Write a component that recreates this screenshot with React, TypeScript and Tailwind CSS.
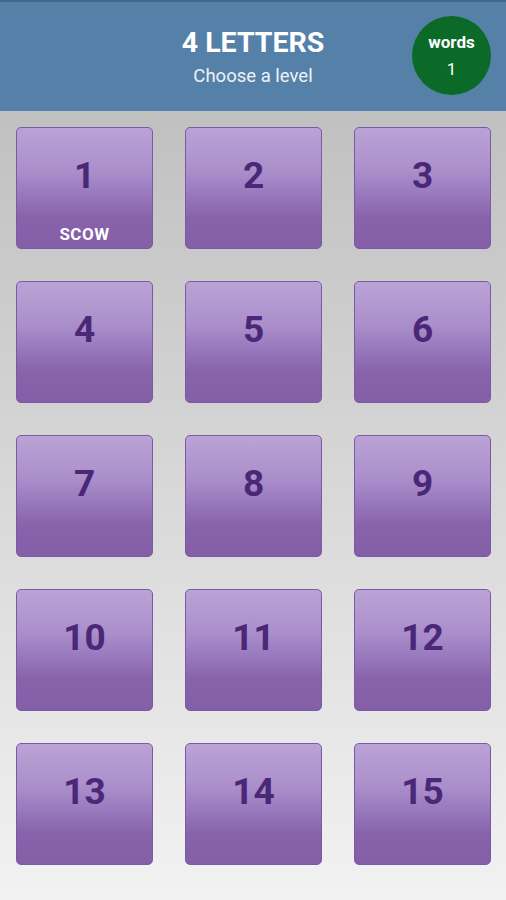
import React from 'react';

const levels = Array.from({ length: 15 }, (_, i) => i + 1);
const solved: Record<number, string> = { 1: 'SCOW' };

export default function App() {
  return (
    <div className="w-[506px] h-[900px] flex flex-col overflow-hidden font-['Roboto',sans-serif]">
      {/* Header */}
      <div className="h-[111px] shrink-0 bg-[#5581a9] border-t-2 border-[#41698e] relative flex flex-col items-center">
        <div className="mt-[25px] text-white font-bold text-[28.5px] leading-[32px]">4 LETTERS</div>
        <div className="mt-[6px] text-[#eef2f7] text-[18.5px] leading-[22px]">Choose a level</div>
        <div className="absolute left-[412px] top-[14px] w-[79px] h-[79px] rounded-full bg-[#0b6a28] flex flex-col items-center justify-center text-white">
          <span className="font-bold text-[17px] leading-[20px]">words</span>
          <span className="text-[17px] leading-[20px] mt-[7px]">1</span>
        </div>
      </div>

      {/* Level grid */}
      <div className="flex-1 bg-gradient-to-b from-[#c0c0c0] to-[#f2f2f2] pl-[16px] pr-[15px] pt-[16px]">
        <div className="grid grid-cols-3 gap-x-[32px] gap-y-[32px]">
          {levels.map(n => (
            <div
              key={n}
              className="h-[122px] rounded-[5px] border border-[#7d58a6] bg-[linear-gradient(to_bottom,#baa3d6_0%,#ab8fcb_35%,#9676bb_58%,#8862aa_75%,#845ea7_100%)] flex flex-col items-center relative"
            >
              <span className="mt-[27px] text-[#4a2877] font-bold text-[37px] leading-[42px]">{n}</span>
              {solved[n] && (
                <span className="absolute bottom-[4px] text-white font-bold text-[17px] leading-[20px] tracking-[0.5px]">
                  {solved[n]}
                </span>
              )}
            </div>
          ))}
        </div>
      </div>
    </div>
  );
}
